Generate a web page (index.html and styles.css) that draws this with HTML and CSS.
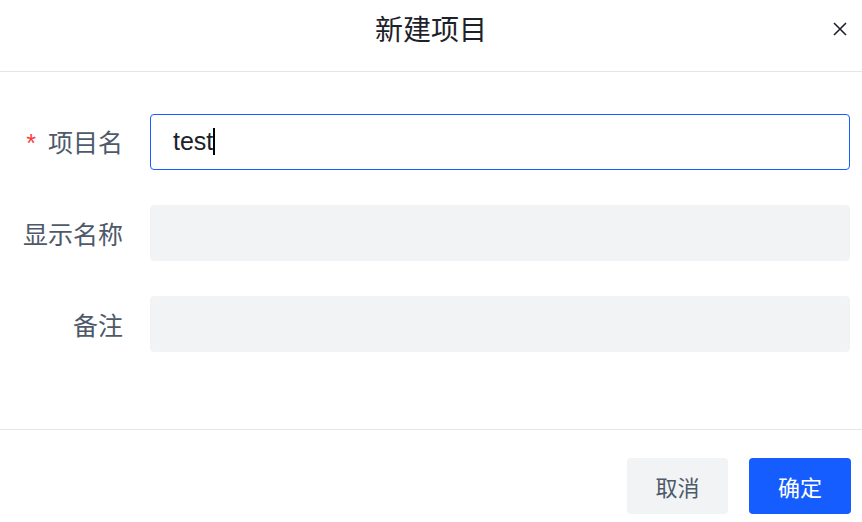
FILE: index.html
```html
<!DOCTYPE html>
<html lang="zh-CN">
<head>
    <meta charset="UTF-8">
    <title>新建项目</title>
    <link rel="stylesheet" href="styles.css">
</head>
<body>
    <div class="modal">
        <div class="modal-header">
            <h2 class="modal-title">新建项目</h2>
            <span class="close-btn">
                <svg width="16" height="16" viewBox="0 0 16 16">
                    <path d="M2 2 L14 14 M14 2 L2 14" stroke="#1d2129" stroke-width="1.6" fill="none"/>
                </svg>
            </span>
        </div>

        <form class="modal-body">
            <label class="form-label"><span class="required">*</span>项目名</label>
            <div class="field field-active">test<span class="caret"></span></div>

            <label class="form-label">显示名称</label>
            <div class="field"></div>

            <label class="form-label">备注</label>
            <div class="field"></div>
        </form>

        <div class="modal-footer">
            <button type="button" class="btn btn-secondary">取消</button>
            <button type="button" class="btn btn-primary">确定</button>
        </div>
    </div>
</body>
</html>
```

FILE: styles.css
```css
:root {
    --primary: #165dff;
    --fill: #f2f3f5;
    --text-title: #1d2129;
    --text-label: #4e5969;
    --border-color: #e5e6eb;
}

body {
    margin: 0;
    background: #fff;
    font-family: "Noto Sans CJK SC", "Noto Sans", sans-serif;
    color: var(--text-title);
}

.modal {
    width: 862px;
}

.modal-header {
    height: 72px;
    box-sizing: border-box;
    padding-top: 14px;
    display: flex;
    align-items: flex-start;
    justify-content: center;
    border-bottom: 1px solid var(--border-color);
    position: relative;
}

.modal-title {
    margin: 0;
    font-size: 28px;
    font-weight: 400;
    color: var(--text-title);
    line-height: 1;
}

.close-btn {
    position: absolute;
    right: 14px;
    top: 21px;
    width: 16px;
    height: 16px;
}

.close-btn svg {
    display: block;
}

.modal-body {
    display: grid;
    grid-template-columns: 123px 700px;
    column-gap: 27px;
    row-gap: 35px;
    padding: 42px 0 77px;
    align-items: center;
}

.form-label {
    text-align: right;
    font-size: 25px;
    color: var(--text-label);
    line-height: 1;
    white-space: nowrap;
}

.required {
    color: #f53f3f;
    margin-right: 12px;
    font-family: "Liberation Sans", sans-serif;
}

.field {
    height: 56px;
    box-sizing: border-box;
    background: var(--fill);
    border: 1px solid var(--fill);
    border-radius: 4px;
    padding: 0 22px 2px;
    display: flex;
    align-items: center;
    font-family: "Liberation Sans", "Noto Sans CJK SC", sans-serif;
    font-size: 25px;
    color: var(--text-title);
}

.field-active {
    background: #fff;
    border-color: var(--primary);
}

.caret {
    display: inline-block;
    width: 2px;
    height: 27px;
    background: #000;
}

.modal-footer {
    border-top: 1px solid var(--border-color);
    display: flex;
    justify-content: flex-end;
    gap: 21px;
    padding: 28px 11px 8px 0;
}

.btn {
    height: 56px;
    width: 101px;
    border: none;
    border-radius: 4px;
    font-family: "Noto Sans CJK SC", sans-serif;
    font-size: 22px;
    cursor: pointer;
}

.btn-secondary {
    background: var(--fill);
    color: var(--text-label);
}

.btn-primary {
    background: var(--primary);
    color: #fff;
    width: 102px;
}
```
